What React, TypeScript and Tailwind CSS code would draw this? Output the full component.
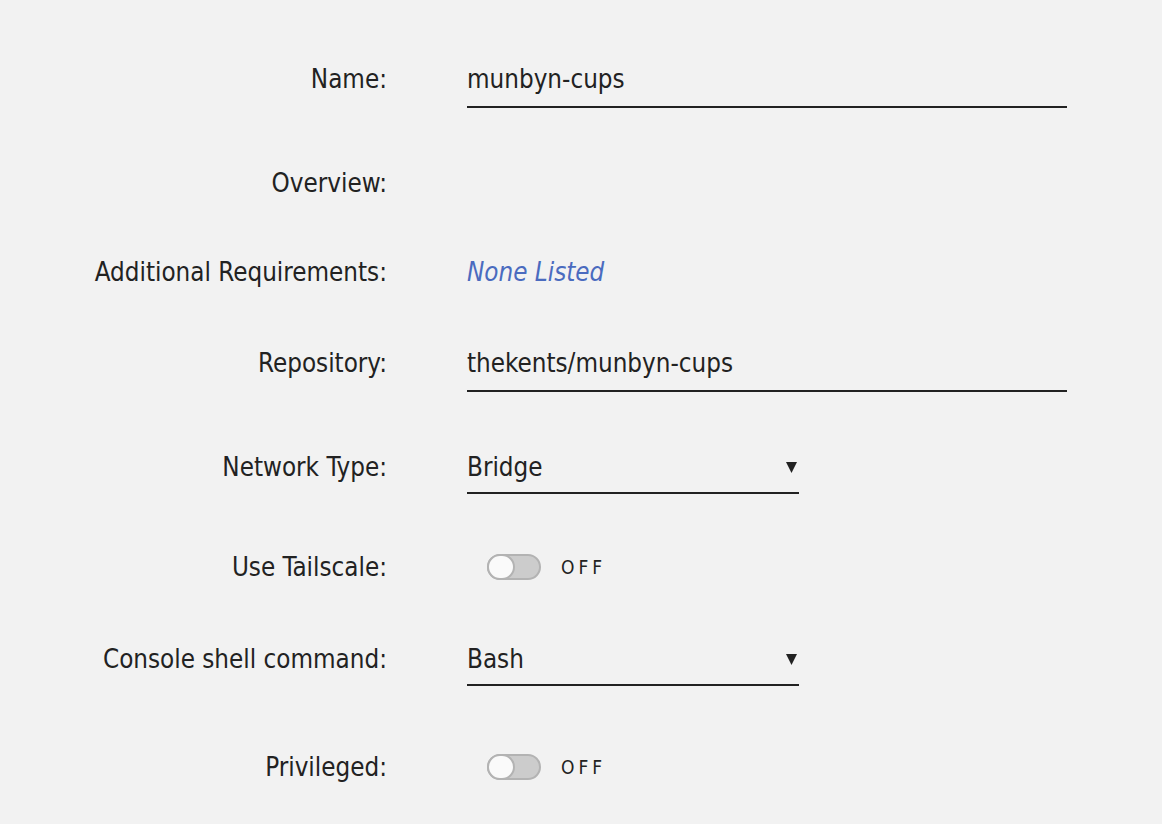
import React, { useState } from 'react';

type ToggleProps = { on: boolean; onChange: () => void };

function Toggle({ on, onChange }: ToggleProps) {
  return (
    <button onClick={onChange} className="flex h-[30px] items-center gap-[20px] focus:outline-none">
      <span
        className={`relative block w-[54px] h-[26px] rounded-full border-2 border-[#b3b3b3] ${on ? 'bg-[#4a6bbf]' : 'bg-[#cccccc]'}`}
      >
        <span
          className={`absolute top-[-2px] w-[28px] h-[26px] rounded-full bg-[#fafafa] border-2 border-[#b3b3b3] ${on ? 'right-[-2px]' : 'left-[-2px]'}`}
        />
      </span>
      <span className="text-[19px] leading-[30px] tracking-[4px] text-[#222]">{on ? 'ON' : 'OFF'}</span>
    </button>
  );
}

function Arrow() {
  return (
    <svg width="11" height="11" viewBox="0 0 11 11" className="mr-[2px] self-center">
      <path d="M0 0h11L5.5 11z" fill="#222" />
    </svg>
  );
}

function Row({ label, mt, children }: { label: string; mt: string; children?: React.ReactNode }) {
  return (
    <div className={`grid grid-cols-[387px_1fr] gap-x-[80px] items-baseline ${mt}`}>
      <div className="text-right leading-[30px] text-[#222]">{label}</div>
      <div className="leading-[30px]">{children}</div>
    </div>
  );
}

function App() {
  const [tailscale, setTailscale] = useState(false);
  const [privileged, setPrivileged] = useState(false);

  return (
    <div
      className="min-h-[824px] w-full bg-[#f2f2f2] pt-[64px] text-[25.75px] text-[#222]"
      style={{ fontFamily: '"DejaVu Sans Condensed", "DejaVu Sans", sans-serif', fontStretch: 'condensed' }}
    >
      <Row label="Name:" mt="mt-0">
        <div className="w-[600px] pb-[12px] border-b-2 border-[#222]">munbyn-cups</div>
      </Row>
      <Row label="Overview:" mt="mt-[60px]" />
      <Row label="Additional Requirements:" mt="mt-[59px]">
        <a href="#" className="italic text-[#4a6bbf]">None Listed</a>
      </Row>
      <Row label="Repository:" mt="mt-[61px]">
        <div className="w-[600px] pb-[12px] border-b-2 border-[#222]">thekents/munbyn-cups</div>
      </Row>
      <Row label="Network Type:" mt="mt-[60px]">
        <div className="w-[332px] pb-[10px] border-b-2 border-[#222] flex items-center justify-between">
          <span>Bridge</span>
          <Arrow />
        </div>
      </Row>
      <div className="grid grid-cols-[387px_1fr] gap-x-[80px] items-center mt-[58px] h-[30px]">
        <div className="text-right leading-[30px]">Use Tailscale:</div>
        <div className="pl-[20px]">
          <Toggle on={tailscale} onChange={() => setTailscale(!tailscale)} />
        </div>
      </div>
      <Row label="Console shell command:" mt="mt-[62px]">
        <div className="w-[332px] pb-[10px] border-b-2 border-[#222] flex items-center justify-between">
          <span>Bash</span>
          <Arrow />
        </div>
      </Row>
      <div className="grid grid-cols-[387px_1fr] gap-x-[80px] items-center mt-[66px] h-[30px]">
        <div className="text-right leading-[30px]">Privileged:</div>
        <div className="pl-[20px]">
          <Toggle on={privileged} onChange={() => setPrivileged(!privileged)} />
        </div>
      </div>
    </div>
  );
}

export default App;
